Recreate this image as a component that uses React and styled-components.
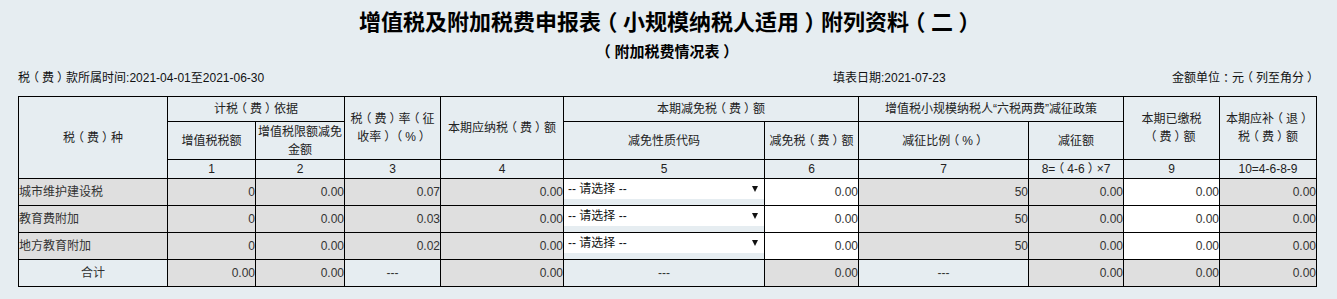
import React from "react";
import styled, { createGlobalStyle } from "styled-components";

const GlobalStyle = createGlobalStyle`
  html, body { margin: 0; padding: 0; background: #e6edf1; }
  body { font-family: "Liberation Sans", "Noto Sans CJK SC", sans-serif; font-size: 12px; color: #222; }
`;

const Page = styled.div`
  padding: 0 21px 0 18px;
  background: #e6edf1;
`;

const Title = styled.h1`
  margin: 0;
  height: 40px;
  line-height: 40px;
  text-align: center;
  font-size: 22px;
  font-weight: bold;
  color: #000;
  font-family: "Noto Sans CJK SC", sans-serif;
`;

const SubTitle = styled.h2`
  margin: 0;
  height: 22px;
  line-height: 22px;
  text-align: center;
  font-size: 15px;
  font-weight: bold;
  color: #000;
  font-family: "Noto Sans CJK SC", sans-serif;
`;

const InfoRow = styled.div`
  display: grid;
  grid-template-columns: 815px 1fr auto;
  padding-top: 7px;
  height: 34px;
  box-sizing: border-box;
  line-height: 18px;
  color: #111;
`;

const Punct = styled.span`
  font-feature-settings: "halt";
  padding: 0 0.25em;
`;

function T({ children }) {
  const parts = String(children).split(/([（）：])/);
  return (
    <>
      {parts.map((p, i) =>
        p === "（" || p === "）" || p === "：" ? <Punct key={i}>{p}</Punct> : p
      )}
    </>
  );
}

const Table = styled.table`
  border-collapse: collapse;
  table-layout: fixed;
  width: 1298px;
  background: #e6edf1;
`;

const HeadCell = styled.td`
  border: 1px solid #000;
  padding: 0;
  text-align: center;
  vertical-align: middle;
  line-height: 18px;
  color: #222;
  background: #e6edf1;
  white-space: nowrap;
`;

const Cell = styled.td`
  border: 1px solid #000;
  padding: 0;
  height: 26px;
  line-height: 18px;
  color: #333;
  white-space: nowrap;
  text-align: ${(p) => p.$align || "right"};
  vertical-align: ${(p) => (p.$top ? "top" : "middle")};
  background: ${(p) =>
    p.$tone === "white" ? "#ffffff" : p.$tone === "light" ? "#e6edf1" : "#dfdfdf"};
`;

const SelectWrap = styled.div`
  position: relative;
  height: 20px;
  background: #fff;
`;

const Select = styled.select`
  appearance: none;
  -webkit-appearance: none;
  display: block;
  width: 100%;
  height: 20px;
  border: none;
  outline: none;
  margin: 0;
  padding: 0 0 0 4px;
  background: #fff;
  font-family: "Liberation Sans", "Noto Sans CJK SC", sans-serif;
  font-size: 12px;
  color: #111;
`;

const Arrow = styled.span`
  position: absolute;
  right: 6px;
  top: 7px;
  width: 0;
  height: 0;
  border-left: 3.5px solid transparent;
  border-right: 3.5px solid transparent;
  border-top: 6px solid #111;
  pointer-events: none;
`;

const colWidths = [149, 88, 89, 96, 123, 201, 94, 170, 95, 96, 97];

const rows = [
  { name: "城市维护建设税", base: "0", rate: "0.07" },
  { name: "教育费附加", base: "0", rate: "0.03" },
  { name: "地方教育附加", base: "0", rate: "0.02" },
];

function CodeSelect() {
  return (
    <SelectWrap>
      <Select defaultValue="">
        <option value="">-- 请选择 --</option>
      </Select>
      <Arrow />
    </SelectWrap>
  );
}

export default function App() {
  return (
    <Page>
      <GlobalStyle />
      <Title>
        <T>增值税及附加税费申报表（小规模纳税人适用）附列资料（二）</T>
      </Title>
      <SubTitle>
        <T>（附加税费情况表）</T>
      </SubTitle>
      <InfoRow>
        <span>
          <T>税（费）款所属时间:2021-04-01至2021-06-30</T>
        </span>
        <span>填表日期:2021-07-23</span>
        <span>
          <T>金额单位：元（列至角分）</T>
        </span>
      </InfoRow>
      <Table>
        <colgroup>
          {colWidths.map((w, i) => (
            <col key={i} style={{ width: w }} />
          ))}
        </colgroup>
        <thead>
          <tr style={{ height: 25 }}>
            <HeadCell rowSpan={3}>
              <T>税（费）种</T>
            </HeadCell>
            <HeadCell colSpan={2}>
              <T>计税（费）依据</T>
            </HeadCell>
            <HeadCell rowSpan={2}>
              <T>税（费）率（征</T>
              <br />
              <T>收率）（%）</T>
            </HeadCell>
            <HeadCell rowSpan={2}>
              <T>本期应纳税（费）额</T>
            </HeadCell>
            <HeadCell colSpan={2}>
              <T>本期减免税（费）额</T>
            </HeadCell>
            <HeadCell colSpan={2}>增值税小规模纳税人“六税两费”减征政策</HeadCell>
            <HeadCell rowSpan={2}>
              本期已缴税
              <br />
              <T>（费）额</T>
            </HeadCell>
            <HeadCell rowSpan={2}>
              <T>本期应补（退）</T>
              <br />
              <T>税（费）额</T>
            </HeadCell>
          </tr>
          <tr style={{ height: 38 }}>
            <HeadCell>增值税税额</HeadCell>
            <HeadCell>
              增值税限额减免
              <br />
              金额
            </HeadCell>
            <HeadCell>减免性质代码</HeadCell>
            <HeadCell>
              <T>减免税（费）额</T>
            </HeadCell>
            <HeadCell>
              <T>减征比例（%）</T>
            </HeadCell>
            <HeadCell>减征额</HeadCell>
          </tr>
          <tr style={{ height: 18 }}>
            <HeadCell>1</HeadCell>
            <HeadCell>2</HeadCell>
            <HeadCell>3</HeadCell>
            <HeadCell>4</HeadCell>
            <HeadCell>5</HeadCell>
            <HeadCell>6</HeadCell>
            <HeadCell>7</HeadCell>
            <HeadCell>
              <T>8=（4-6）×7</T>
            </HeadCell>
            <HeadCell>9</HeadCell>
            <HeadCell>10=4-6-8-9</HeadCell>
          </tr>
        </thead>
        <tbody>
          {rows.map((r) => (
            <tr key={r.name}>
              <Cell $align="left">{r.name}</Cell>
              <Cell>{r.base}</Cell>
              <Cell>0.00</Cell>
              <Cell>{r.rate}</Cell>
              <Cell>0.00</Cell>
              <Cell $tone="light" $align="left" $top>
                <CodeSelect />
              </Cell>
              <Cell $tone="white">0.00</Cell>
              <Cell>50</Cell>
              <Cell>0.00</Cell>
              <Cell $tone="white">0.00</Cell>
              <Cell>0.00</Cell>
            </tr>
          ))}
          <tr>
            <Cell $tone="light" $align="center">合计</Cell>
            <Cell>0.00</Cell>
            <Cell>0.00</Cell>
            <Cell $tone="light" $align="center">---</Cell>
            <Cell>0.00</Cell>
            <Cell $tone="light" $align="center">---</Cell>
            <Cell>0.00</Cell>
            <Cell $tone="light" $align="center">---</Cell>
            <Cell>0.00</Cell>
            <Cell>0.00</Cell>
            <Cell>0.00</Cell>
          </tr>
        </tbody>
      </Table>
    </Page>
  );
}
